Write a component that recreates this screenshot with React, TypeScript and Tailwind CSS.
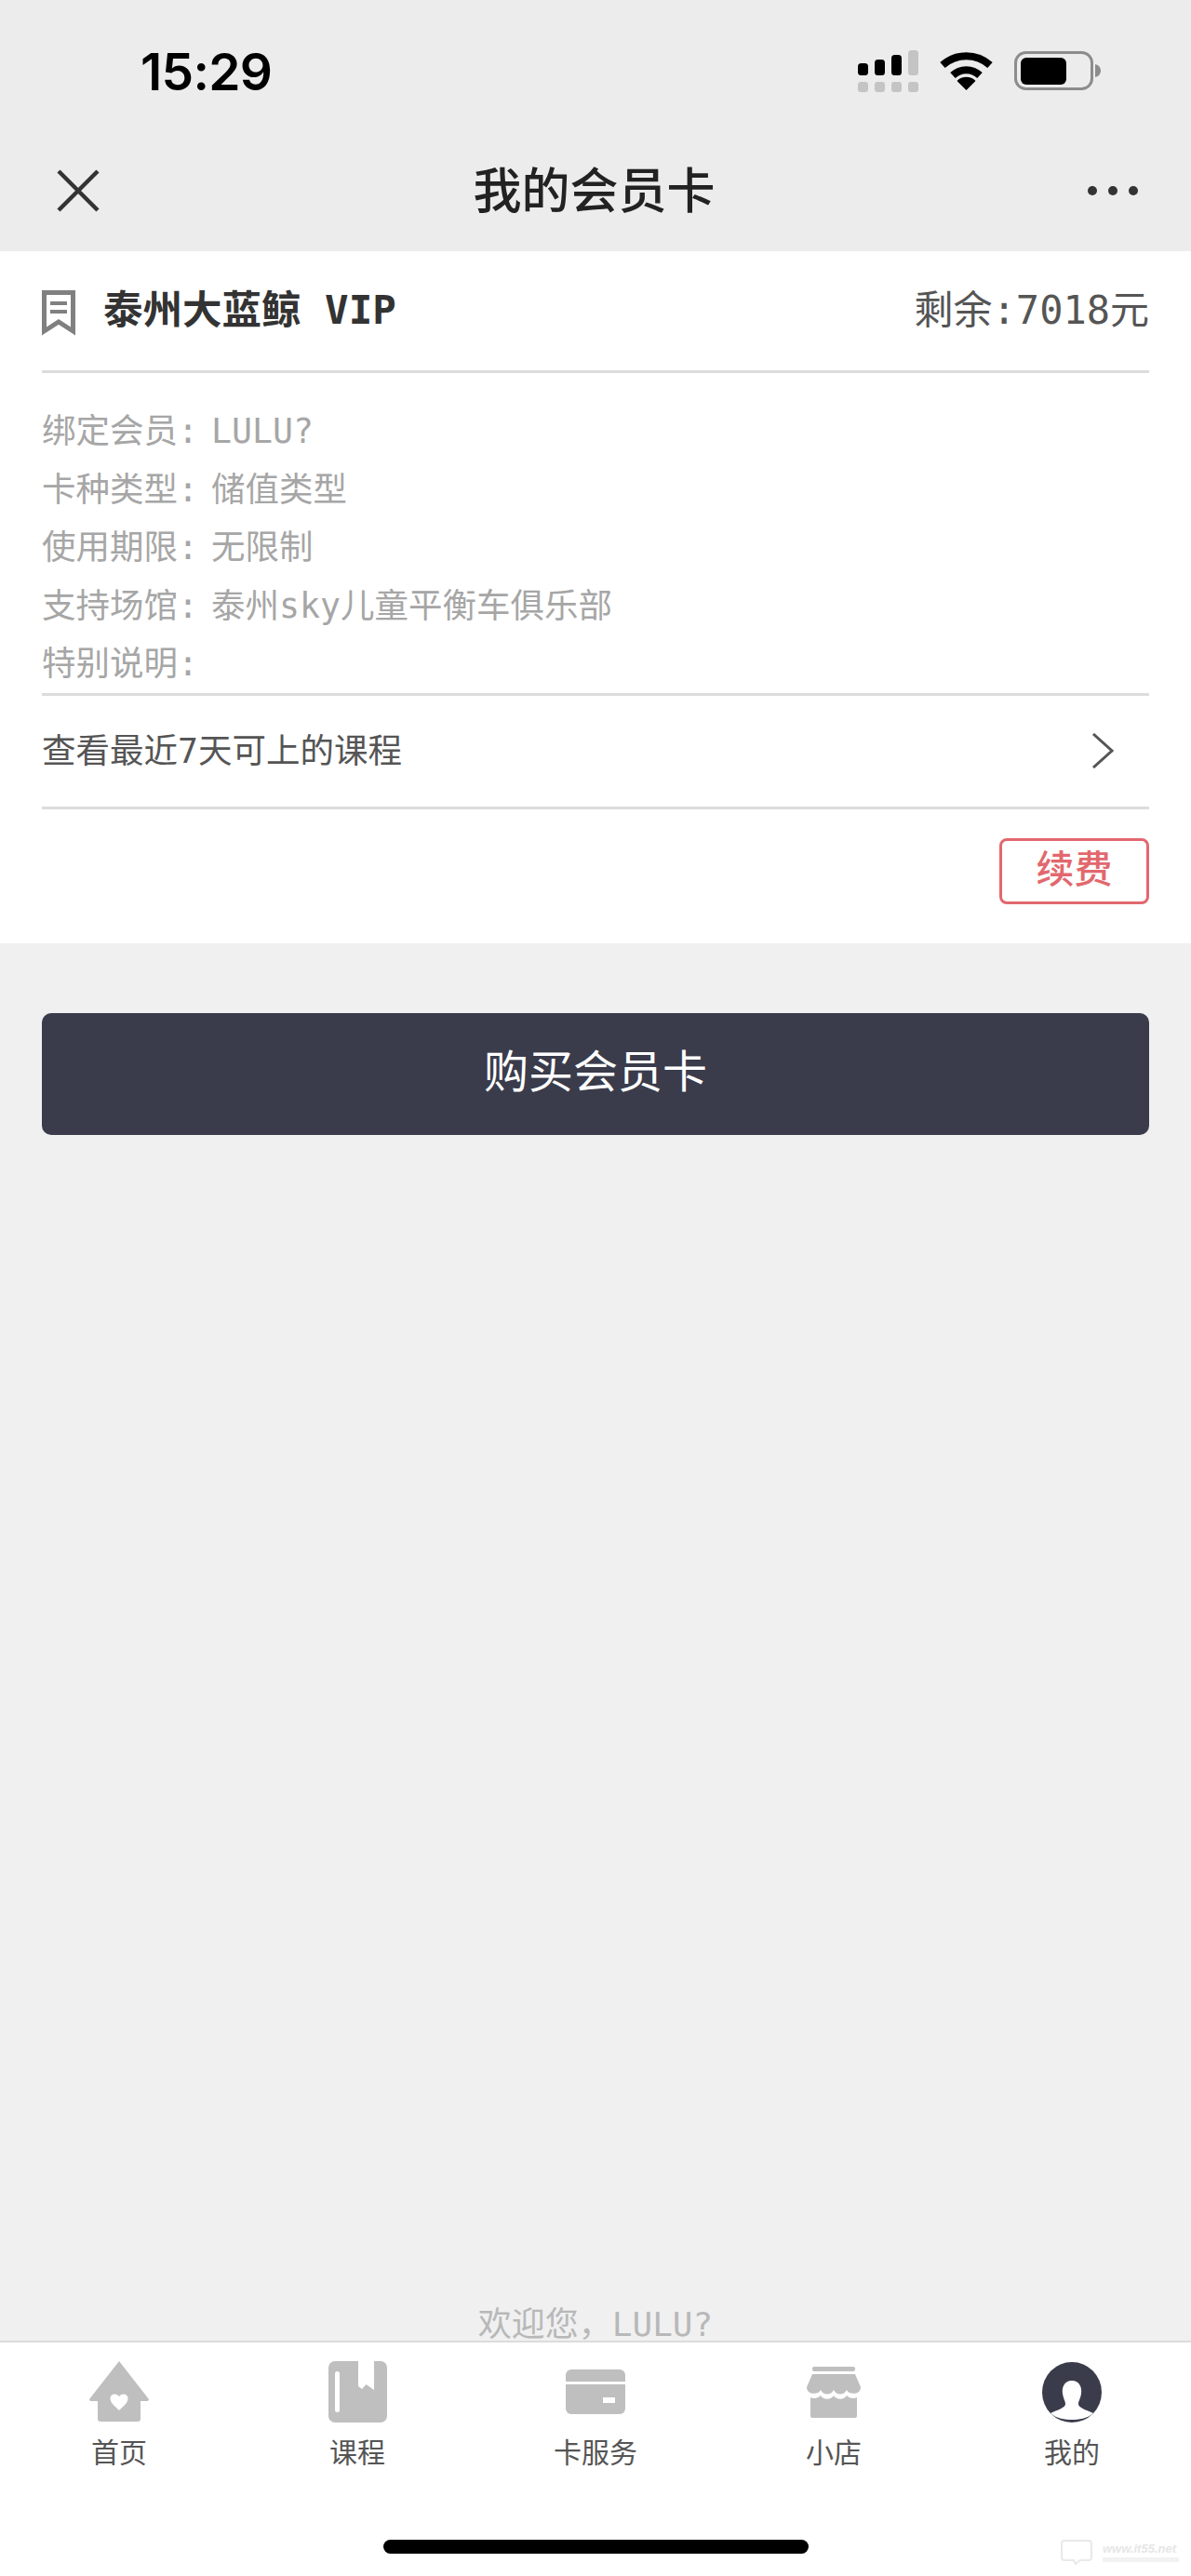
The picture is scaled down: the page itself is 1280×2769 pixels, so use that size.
const MONO = "font-['DejaVu_Sans_Mono','Noto_Sans_CJK_SC',monospace]"

const INFO = [
  { label: '绑定会员', value: 'LULU?' },
  { label: '卡种类型', value: '储值类型' },
  { label: '使用期限', value: '无限制' },
  { label: '支持场馆', value: '泰州sky儿童平衡车俱乐部' },
  { label: '特别说明', value: '' },
]

function HomeIcon() {
  return (
    <svg width="64" height="66" viewBox="0 0 64 66">
      <path d="M32 0 L64 41 Q64 43 62 43 L55 43 L55 62 Q55 65 52 65 L12 65 Q9 65 9 62 L9 43 L2 43 Q0 43 0 41 Z" fill="#bfbfbf" />
      <path d="M32 53 C27 48 22.5 45 22.5 40 C22.5 35 29 34 32 38 C35 34 41.5 35 41.5 40 C41.5 45 37 48 32 53 Z" fill="#fff" />
    </svg>
  )
}

function BookIcon() {
  return (
    <svg width="63" height="66" viewBox="0 0 63 66">
      <rect width="63" height="66" rx="7" fill="#bfbfbf" />
      <rect x="7" y="11" width="5" height="44" rx="2.5" fill="#fff" />
      <path d="M32 0 L49 0 L49 31 L40.5 25 L36 30 L32 27 Z" fill="#fff" />
    </svg>
  )
}

function CardIcon() {
  return (
    <svg width="64" height="48" viewBox="0 0 64 48">
      <rect width="64" height="48" rx="6" fill="#bfbfbf" />
      <rect y="13" width="64" height="3" fill="#fff" />
      <rect x="40" y="30" width="13" height="6" fill="#fff" />
    </svg>
  )
}

function ShopIcon() {
  return (
    <svg width="58" height="55" viewBox="0 0 58 55">
      <rect x="6" y="0" width="46" height="5" rx="2" fill="#bfbfbf" />
      <path d="M6 8 L52 8 L58 22 C58 30 46 31 43 25 C40 31 32 31 29 25 C26 31 18 31 15 25 C12 31 0 30 0 22 Z" fill="#bfbfbf" />
      <path d="M4 33 C8 35 12 34 15 31 C18 36 26 36 29 31 C32 36 40 36 43 31 C46 34 50 35 54 33 L54 53 Q54 55 52 55 L6 55 Q4 55 4 53 Z" fill="#bfbfbf" />
    </svg>
  )
}

function MeIcon() {
  return (
    <svg width="64" height="65" viewBox="0 0 64 65">
      <ellipse cx="32" cy="32.5" rx="32" ry="32.5" fill="#3a3c4b" />
      <path d="M32 20 C40 20 43 27 42 34 C41 40 39 42 39 45 C39 49 46 51 55 55 C48 61 40 62 32 62 C24 62 16 61 9 55 C18 51 25 49 25 45 C25 42 23 40 22 34 C21 27 24 20 32 20 Z" fill="#fff" />
    </svg>
  )
}

const TABS = [
  { label: '首页', icon: <HomeIcon /> },
  { label: '课程', icon: <BookIcon /> },
  { label: '卡服务', icon: <CardIcon /> },
  { label: '小店', icon: <ShopIcon /> },
  { label: '我的', icon: <MeIcon /> },
]

function StatusIcons() {
  return (
    <div className="flex items-center">
      <svg width="65" height="45" viewBox="0 0 65 45">
        <rect x="0" y="14" width="11" height="13" rx="3.5" fill="#000" />
        <rect x="18" y="10" width="11" height="17" rx="3.5" fill="#000" />
        <rect x="36" y="5" width="11" height="22" rx="3.5" fill="#000" />
        <rect x="54" y="0" width="11" height="27" rx="3.5" fill="#c4c4c4" />
        <rect x="0" y="34" width="11" height="11" rx="3" fill="#c4c4c4" />
        <rect x="18" y="34" width="11" height="11" rx="3" fill="#c4c4c4" />
        <rect x="36" y="34" width="11" height="11" rx="3" fill="#c4c4c4" />
        <rect x="54" y="34" width="11" height="11" rx="3" fill="#c4c4c4" />
      </svg>
      <svg className="ml-[23px]" width="57" height="42" viewBox="0 0 57 42">
        <path d="M3 15 A38 38 0 0 1 54 15" fill="none" stroke="#000" strokeWidth="8" />
        <path d="M14 26 A21 21 0 0 1 43 26" fill="none" stroke="#000" strokeWidth="8" />
        <path d="M28.5 42 L18.5 32 A14 14 0 0 1 38.5 32 Z" fill="#000" />
      </svg>
      <svg className="ml-[23px]" width="93" height="42" viewBox="0 0 93 42">
        <rect x="1.5" y="1.5" width="82" height="39" rx="11" fill="none" stroke="#8c8c8c" strokeWidth="3" />
        <rect x="7" y="7" width="49" height="29" rx="6" fill="#000" />
        <path d="M87 14 C91 15 93 18 93 21 C93 24 91 27 87 28 Z" fill="#8c8c8c" />
      </svg>
    </div>
  )
}

export default function App() {
  return (
    <div className="flex h-[2769px] w-[1280px] flex-col overflow-hidden bg-[#f0f0f1] font-['Noto_Sans_CJK_SC',sans-serif]">
      {/* Status bar + title bar */}
      <div className="bg-[#ececec]">
        <div className="flex h-[152px] items-center justify-between pl-[151px] pr-[97px]">
          <span className="mt-[2px] font-['Inter',sans-serif] text-[55px] font-semibold tracking-[-0.7px] text-black">15:29</span>
          <StatusIcons />
        </div>
        <div className="flex h-[118px] items-center justify-between pb-[12px] pl-[60px] pr-[57px]">
          <svg width="48" height="48" viewBox="0 0 48 48">
            <path d="M3 3 L45 45 M45 3 L3 45" stroke="#333" strokeWidth="4.5" fill="none" />
          </svg>
          <h1 className="-mt-[6px] text-[52px] font-medium text-[#222]">我的会员卡</h1>
          <div className="flex gap-[12px]">
            <div className="h-[10px] w-[10px] rounded-full bg-[#333]" />
            <div className="h-[10px] w-[10px] rounded-full bg-[#333]" />
            <div className="h-[10px] w-[10px] rounded-full bg-[#333]" />
          </div>
        </div>
      </div>

      {/* Member card */}
      <div className="bg-white px-[45px]">
        <div className="flex h-[131px] items-center justify-between border-b-[3px] border-[#dcdcdc]">
          <div className="flex items-center">
            <svg className="mt-[6px]" width="36" height="50" viewBox="0 0 36 50">
              <path d="M2.5 2.5 H33.5 V44 L18 34 L2.5 44 Z" fill="none" stroke="#808080" strokeWidth="5" />
              <rect x="9" y="12" width="18" height="4" fill="#808080" />
              <rect x="9" y="21" width="18" height="4" fill="#808080" />
            </svg>
            <span className={`ml-[30px] mt-[1px] text-[42.5px] font-bold leading-none text-[#333] ${MONO}`}>泰州大蓝鲸 VIP</span>
          </div>
          <span className={`text-[42px] leading-none text-[#555] ${MONO}`}>剩余:7018元</span>
        </div>

        <div className="border-b-[3px] border-[#dcdcdc] pt-[31px]">
          {INFO.map(row => (
            <div key={row.label} className={`flex h-[62.5px] text-[36.5px] leading-[63.5px] text-[#a6a6a6] ${MONO}`}>
              <span className="w-[182px]">{row.label}:</span>
              <span>{row.value}</span>
            </div>
          ))}
        </div>

        <div className="flex h-[122px] items-center justify-between border-b-[3px] border-[#dcdcdc] pr-[38px]">
          <span className={`mt-[2px] text-[36.5px] text-[#555] ${MONO}`}>查看最近7天可上的课程</span>
          <svg width="24" height="38" viewBox="0 0 24 38">
            <path d="M2 1 L22 19 L2 37" stroke="#555" strokeWidth="3" fill="none" />
          </svg>
        </div>

        <div className="flex justify-end pb-[42px] pt-[31px]">
          <button className="flex h-[71px] w-[161px] items-center justify-center rounded-[8px] border-[3px] border-[#e2686e] pb-[8px] text-[41px] font-medium text-[#e2686e]">
            续费
          </button>
        </div>
      </div>

      {/* Buy button */}
      <div className="px-[45px] pt-[75px]">
        <button className="flex h-[131px] w-full items-center justify-center rounded-[10px] bg-[#3a3c4b] pb-[12px] text-[48px] text-white">
          购买会员卡
        </button>
      </div>

      <div className="flex flex-1 items-end justify-center">
        <span className={`text-[36px] leading-[34px] text-[#b8b8b8] ${MONO}`}>欢迎您，LULU?</span>
      </div>

      {/* Tab bar */}
      <div className="relative h-[253px] border-t-[2px] border-[#dcdcdc] bg-white">
        <div className="grid grid-cols-5 pt-[20px]">
          {TABS.map(tab => (
            <div key={tab.label} className="flex flex-col items-center">
              <div className="flex h-[66px] items-center justify-center">{tab.icon}</div>
              <span className="mt-[10px] text-[30px] leading-[40px] text-[#555]">{tab.label}</span>
            </div>
          ))}
        </div>
        <div className="absolute bottom-[24px] left-[412px] h-[15px] w-[457px] rounded-full bg-black" />

        {/* faint watermark */}
        <div className="absolute bottom-[12px] left-[1139px] flex items-center gap-[10px]">
          <svg width="36" height="28" viewBox="0 0 36 28">
            <path d="M5 2 H31 Q34 2 34 5 V20 Q34 23 31 23 H22 L17 27 L15 23 H5 Q2 23 2 20 V5 Q2 2 5 2 Z" fill="none" stroke="#e9e9e9" strokeWidth="2" />
          </svg>
          <div className="flex w-[82px] flex-col gap-[3px]">
            <span className="font-['Liberation_Sans',sans-serif] text-[13px] font-bold italic leading-[13px] text-[#e6e6e6]">www.it55.net</span>
            <div className="h-[5px] w-full bg-[#f2f2f2]" />
          </div>
        </div>
      </div>
    </div>
  )
}
